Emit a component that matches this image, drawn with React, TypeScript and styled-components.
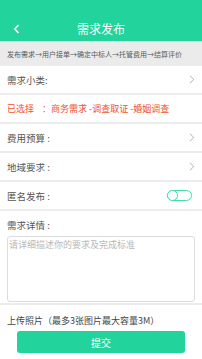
import React from "react";
import styled, { createGlobalStyle } from "styled-components";

const GlobalStyle = createGlobalStyle`
  html, body { margin: 0; padding: 0; }
  body {
    font-family: "Noto Sans CJK SC", "Noto Sans", sans-serif;
    width: 202px;
    height: 359px;
    overflow: hidden;
    background: #ffffff;
  }
  * { box-sizing: border-box; }
`;

const Page = styled.div`
  width: 202px;
  height: 359px;
  display: flex;
  flex-direction: column;
  background: #ececec;
`;

const Header = styled.header`
  height: 41px;
  padding-top: 17px;
  background: #22d39b;
  display: flex;
`;

const Nav = styled.div`
  position: relative;
  flex: 1;
  display: flex;
  align-items: center;
  justify-content: center;
`;

const BackButton = styled.span`
  position: absolute;
  left: 12px;
  top: 6px;
  width: 10px;
  height: 12px;
  display: flex;
`;

const Title = styled.h1`
  margin: 0;
  font-size: 12px;
  font-weight: 400;
  color: #ffffff;
  line-height: 14px;
`;

const Steps = styled.div`
  height: 25px;
  padding-left: 7px;
  display: flex;
  align-items: center;
  font-size: 7px;
  color: #5a5a5a;
  background: #ebebeb;
  white-space: nowrap;
`;

const List = styled.div`
  display: flex;
  flex-direction: column;
  gap: 2px;
`;

const Row = styled.div`
  height: 27px;
  padding: 0 7px;
  display: flex;
  align-items: center;
  justify-content: space-between;
  background: #ffffff;
`;

const Label = styled.span<{ $accent?: boolean }>`
  font-size: ${(p) => (p.$accent ? "9px" : "9.5px")};
  color: ${(p) => (p.$accent ? "#f0522c" : "#555555")};
  white-space: nowrap;
  line-height: 14px;
`;

const Gap = styled.span`
  display: inline-block;
  width: 8px;
`;

const Toggle = styled.span`
  width: 25px;
  height: 11px;
  border: 1px solid #46dba9;
  border-radius: 6px;
  display: flex;
  align-items: center;
  margin-right: 3px;
`;

const Knob = styled.span`
  width: 11px;
  height: 11px;
  margin-left: -1px;
  border: 1px solid #46dba9;
  border-radius: 50%;
  background: #ffffff;
`;

const Details = styled.section`
  margin-top: 2px;
  padding: 7px 7px 1px;
  background: #ffffff;
  display: flex;
  flex-direction: column;
  gap: 4px;
`;

const TextArea = styled.textarea`
  width: 188px;
  height: 66px;
  margin: 0;
  padding: 2px 1px;
  border: 1px solid #dcdcdc;
  border-radius: 3px;
  resize: none;
  font-family: inherit;
  font-size: 9px;
  line-height: 12px;
  color: #333333;
  outline: none;
  &::placeholder { color: #b8b8b8; }
`;

const Bottom = styled.section`
  flex: 1;
  margin-top: 2px;
  padding: 9px 7px 0;
  background: #ffffff;
  display: flex;
  flex-direction: column;
  gap: 3px;
`;

const UploadText = styled.div`
  font-size: 9px;
  line-height: 14px;
  color: #444444;
  white-space: nowrap;
`;

const Submit = styled.button`
  align-self: center;
  width: 168px;
  height: 22px;
  border: none;
  border-radius: 3px;
  background: #22d39b;
  color: #ffffff;
  font-family: inherit;
  font-size: 10px;
  padding: 0;
`;

const Chevron = () => (
  <svg width="6" height="9" viewBox="0 0 6 9" fill="none">
    <path d="M1 0.8 L4.8 4.5 L1 8.2" stroke="#a8a8a8" strokeWidth="0.9" />
  </svg>
);

export default function App() {
  return (
    <>
      <GlobalStyle />
      <Page>
        <Header>
          <Nav>
            <BackButton>
              <svg width="10" height="12" viewBox="0 0 10 12" fill="none">
                <path d="M6.5 2 L2.8 6 L6.5 10" stroke="#ffffff" strokeWidth="1.6" />
              </svg>
            </BackButton>
            <Title>需求发布</Title>
          </Nav>
        </Header>
        <Steps>发布需求→用户接单→确定中标人→托管费用→结算评价</Steps>
        <List>
          <Row>
            <Label>需求小类:</Label>
            <Chevron />
          </Row>
          <Row>
            <Label $accent>
              已选择<Gap />：商务需求 -调查取证 -婚姻调查
            </Label>
          </Row>
          <Row>
            <Label>费用预算 :</Label>
            <Chevron />
          </Row>
          <Row>
            <Label>地域要求 :</Label>
            <Chevron />
          </Row>
          <Row>
            <Label>匿名发布 :</Label>
            <Toggle>
              <Knob />
            </Toggle>
          </Row>
        </List>
        <Details>
          <Label>需求详情 :</Label>
          <TextArea placeholder="请详细描述你的要求及完成标准" />
        </Details>
        <Bottom>
          <UploadText>上传照片（最多3张图片最大容量3M）</UploadText>
          <Submit>提交</Submit>
        </Bottom>
      </Page>
    </>
  );
}
